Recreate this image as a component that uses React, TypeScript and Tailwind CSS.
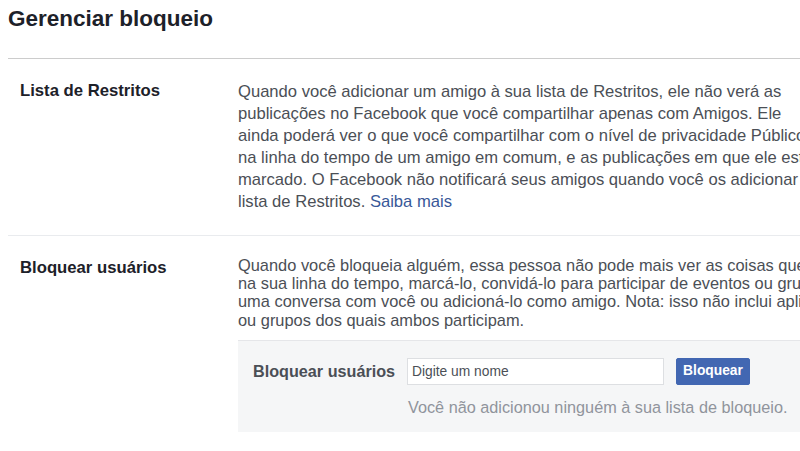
const restrictLines = [
  "Quando você adicionar um amigo à sua lista de Restritos, ele não verá as",
  "publicações no Facebook que você compartilhar apenas com Amigos. Ele",
  "ainda poderá ver o que você compartilhar com o nível de privacidade Público e",
  "na linha do tempo de um amigo em comum, e as publicações em que ele estiver",
  "marcado. O Facebook não notificará seus amigos quando você os adicionar à",
];

const blockLines = [
  "Quando você bloqueia alguém, essa pessoa não pode mais ver as coisas que você publica",
  "na sua linha do tempo, marcá-lo, convidá-lo para participar de eventos ou grupos, iniciar",
  "uma conversa com você ou adicioná-lo como amigo. Nota: isso não inclui aplicativos, jogos",
  "ou grupos dos quais ambos participam.",
];

export default function App() {
  return (
    <div className="w-[800px] h-[451px] overflow-hidden bg-white font-['Liberation_Sans',Arial,sans-serif]">
      {/* header */}
      <h1 className="px-2 pt-[5px] text-[22.5px] leading-[28px] font-bold text-[#1d2129]">
        Gerenciar bloqueio
      </h1>
      <div className="ml-2 mt-[25px] border-t border-[#cccccc]" />

      {/* restricted list */}
      <div className="flex ml-2 pt-[22px] pb-[22px] border-b border-[#e9ebee]">
        <div className="w-[230px] shrink-0 pl-3 text-[16.7px] leading-[20px] font-bold text-[#1d2129]">
          Lista de Restritos
        </div>
        <div className="whitespace-nowrap text-[16.6px] leading-[22px] text-[#4b4f56]">
          {restrictLines.map((l) => (
            <div key={l}>{l}</div>
          ))}
          <div>
            lista de Restritos.{" "}
            <a href="#" className="text-[#385898]">
              Saiba mais
            </a>
          </div>
        </div>
      </div>

      {/* block users */}
      <div className="flex ml-2 pt-[20px]">
        <div className="w-[230px] shrink-0 pl-3 mt-[2px] text-[16.7px] leading-[20px] font-bold text-[#1d2129]">
          Bloquear usuários
        </div>
        <div className="flex-1 min-w-0">
          <div className="whitespace-nowrap text-[16.4px] leading-[18.2px] text-[#4b4f56]">
            {blockLines.map((l) => (
              <div key={l}>{l}</div>
            ))}
          </div>
          <div className="mt-[11px] w-[700px] h-[92px] bg-[#f5f6f7] border-t border-[#e5e6e9] pl-[15px] pt-[17px]">
            <div className="flex items-center gap-3">
              <span className="w-[142px] text-[16.2px] font-bold text-[#4b4f56] whitespace-nowrap">
                Bloquear usuários
              </span>
              <input
                placeholder="Digite um nome"
                className="w-[257px] h-[27px] bg-white border border-[#dddfe2] px-[4px] text-[13.8px] text-[#1d2129] placeholder:text-[#4b4f56] outline-none"
              />
              <button className="w-[74px] h-[27px] rounded-[2px] bg-[#4267b2] border border-[#4267b2] text-white text-[13.8px] font-bold">
                Bloquear
              </button>
            </div>
            <div className="ml-[155px] mt-[12px] text-[16.25px] leading-[20px] text-[#90949c] whitespace-nowrap">
              Você não adicionou ninguém à sua lista de bloqueio.
            </div>
          </div>
        </div>
      </div>
    </div>
  );
}
